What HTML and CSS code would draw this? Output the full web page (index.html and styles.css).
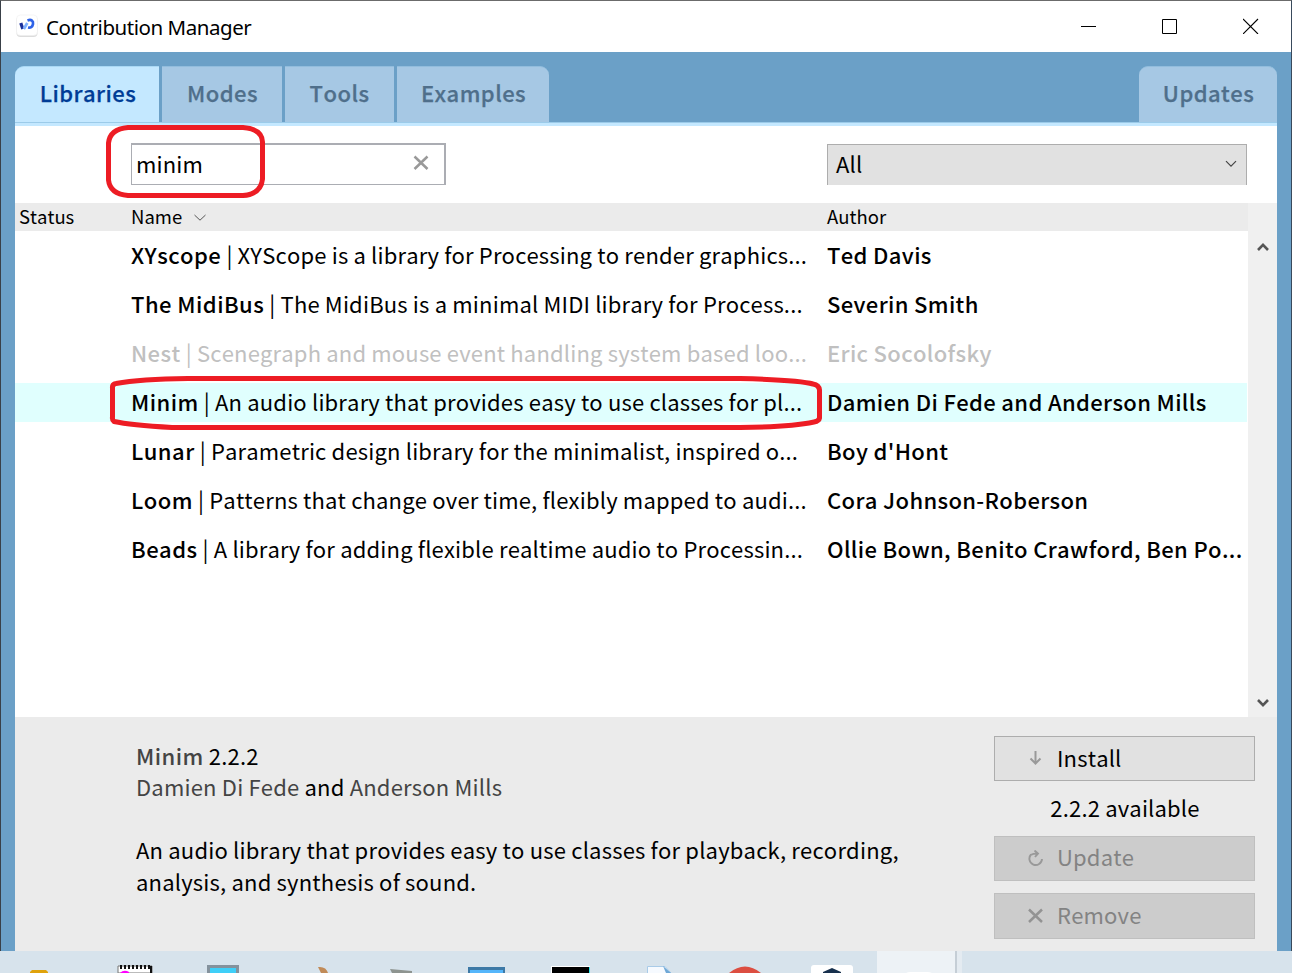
FILE: index.html
```html
<!DOCTYPE html>
<html lang="en">
<head>
<meta charset="utf-8">
<title>Contribution Manager</title>
<link rel="stylesheet" href="styles.css">
</head>
<body>
<div class="screen">
  <div class="window">
    <header class="titlebar">
      <svg class="app-icon" width="24" height="24" viewBox="0 0 24 24">
        <rect x="1.5" y="2" width="21" height="21" rx="4" fill="#dcdcdc"/>
        <rect x="1.500" y="1" width="21" height="20.5" rx="4" fill="#fff" stroke="#eee" stroke-width=".6"/>
        <path d="M5.800 9l2 6" stroke="#1b2f9a" stroke-width="3.200"/>
        <path d="M8.800 15l3.500-6" stroke="#7db0ff" stroke-width="2.800"/>
        <path d="M12.500 6.500c4-1.500 6 .5 5.500 3.500s-2.500 4-5 3.500" fill="none" stroke="#2f63e8" stroke-width="2.700"/>
      </svg>
      <h1 class="title">Contribution Manager</h1>
      <div class="controls">
        <svg width="16" height="16" viewBox="0 0 16 16"><path d="M0 8.500h15" stroke="#000"/></svg>
        <svg width="16" height="16" viewBox="0 0 16 16"><path d="M.5 1.500h14v14H.5z" fill="none" stroke="#000"/></svg>
        <svg width="16" height="16" viewBox="0 0 16 16"><path d="M0 1l15 15M15 1L0 16" stroke="#000" stroke-width="1.100"/></svg>
      </div>
    </header>
    <main class="frame">
      <nav class="tabs">
        <div class="tab active t-lib">Libraries</div>
        <div class="tab t-modes">Modes</div>
        <div class="tab t-tools">Tools</div>
        <div class="tab t-ex">Examples</div>
        <div class="tab t-up">Updates</div>
      </nav>
      <section class="filters">
        <div class="search"><span>minim</span>
          <svg width="16" height="16" viewBox="0 0 16 16"><path d="M1.500 1.500l13 12.500M14.500 1.500L1.500 14" stroke="#999" stroke-width="2.500"/></svg>
        </div>
        <div class="select"><span>All</span>
          <svg width="12" height="8" viewBox="0 0 12 8"><path d="M1 1.200l5 5 5-5" fill="none" stroke="#444" stroke-width="1.200"/></svg>
        </div>
      </section>
      <section class="list">
        <div class="table">
          <div class="thead">
            <span>Status</span>
            <span class="sorted">Name <svg width="12" height="8" viewBox="0 0 12 8"><path d="M.5 1l5.500 5.200L11.500 1" fill="none" stroke="#555"/></svg></span>
            <span>Author</span>
          </div>
          <div class="row"><p><b>XYscope</b> | XYScope is a library for Processing to render graphics...</p><b>Ted Davis</b></div>
          <div class="row"><p><b>The MidiBus</b> | The MidiBus is a minimal MIDI library for Process...</p><b>Severin Smith</b></div>
          <div class="row muted"><p><b>Nest</b> | Scenegraph and mouse event handling system based loo...</p><b>Eric Socolofsky</b></div>
          <div class="row selected"><p><b>Minim</b> | An audio library that provides easy to use classes for pl...</p><b>Damien Di Fede and Anderson Mills</b></div>
          <div class="row"><p><b>Lunar</b> | Parametric design library for the minimalist, inspired o...</p><b>Boy d'Hont</b></div>
          <div class="row"><p><b>Loom</b> | Patterns that change over time, flexibly mapped to audi...</p><b>Cora Johnson-Roberson</b></div>
          <div class="row"><p><b>Beads</b> | A library for adding flexible realtime audio to Processin...</p><b>Ollie Bown, Benito Crawford, Ben Po...</b></div>
        </div>
        <div class="scrollbar">
          <svg width="12" height="10" viewBox="0 0 12 10"><path d="M1 8l5-5.200L11 8" fill="none" stroke="#555" stroke-width="2.600"/></svg>
          <svg width="12" height="10" viewBox="0 0 12 10"><path d="M1 2l5 5.200L11 2" fill="none" stroke="#555" stroke-width="2.600"/></svg>
        </div>
      </section>
      <section class="detail">
        <div class="info">
          <p><b class="link">Minim</b> 2.2.2</p>
          <p class="authors"><span class="link">Damien Di Fede</span> and <span class="link">Anderson Mills</span></p>
          <p class="desc">An audio library that provides easy to use classes for playback, recording,<br>analysis, and synthesis of sound.</p>
        </div>
        <div class="actions">
          <div class="button install"><svg width="16" height="16" viewBox="0 0 16 16"><path d="M8.500 1v12M3.500 8.500l5 5 5-5" fill="none" stroke="#999" stroke-width="2"/></svg>Install</div>
          <div class="available">2.2.2 available</div>
          <div class="button disabled update"><svg width="16" height="16" viewBox="0 0 16 16"><path d="M4 4.500A6.300 6.300 0 1 0 15 9M3.500 5Q6 3.500 10.500 3.500M7.500 .5l3.500 3L8 7" fill="none" stroke="#999" stroke-width="1.900"/></svg>Update</div>
          <div class="button disabled remove"><svg width="16" height="16" viewBox="0 0 16 16"><path d="M2 1.500l13 12.500M15 1.500L2 14" stroke="#939393" stroke-width="2.500"/></svg>Remove</div>
        </div>
      </section>
    </main>
  </div>
  <footer class="taskbar">
    <svg width="1292" height="22" viewBox="0 0 1292 22">
      <path d="M877 0h78v22h-78z" fill="#edf2f6"/><path d="M955 0h2v22h-2z" fill="#c5ced6"/><path d="M957 0h5v22h-5z" fill="#e4ebf1"/>
      <path d="M30 22v-1l2-2h14l2 2v1z" fill="#dfa20c"/>
      <path d="M118 15h34v7h-34z" fill="#fff" stroke="#777"/><path d="M120 16h30" stroke="#111" stroke-width="4" stroke-dasharray="2 2"/><path d="M151 15v7" stroke="#111" stroke-width="2"/><path d="M120 22q4-4 9-1v1z" fill="#f0f"/>
      <path d="M207 14h32v8h-32z" fill="#84929d"/><path d="M210 17h26v5h-26z" fill="#3fcff8"/>
      <path d="M318 16q8-1 10 6h-7z" fill="#c18b58"/>
      <path d="M390 18l22 2v2h-20z" fill="#8e9490"/>
      <path d="M468 16h37v6h-37z" fill="#3d79a6"/><path d="M470 19h33v3h-33z" fill="#55b6fb"/>
      <path d="M551 15h39v7h-39z" fill="#fff"/><path d="M552 16h37v6h-37z"/><path d="M589.500 16v6" stroke="#35e5ee"/>
      <path d="M647.500 22v-6.500H665l6 6.500" fill="#f6faff" stroke="#a9cbe8"/><path d="M663 15l8 7h-5z" fill="#6ea7d6"/>
      <path d="M729 22q16-13 32 0z" fill="#dc4e41"/>
      <path d="M811 22v-5q0-3 3-3h36q3 0 3 3v5z" fill="#fff"/><path d="M823 22v-1l9-4 9 4v1z" fill="#17304d"/>
      <path d="M906 22q2-1 5-1h16q3 0 5 1z" fill="#fff"/>
    </svg>
  </footer>
  <svg class="marks" width="1292" height="973" viewBox="0 0 1292 973">
    <path d="M128 127.500H243Q262 129 262.500 142V179Q261 194 243 195.500H128Q110 194 108.500 180V143Q110 129 128 127.500Z"/>
    <path d="M188 378.500H740Q800 380 813 384Q819 385 819.500 390V418Q819 421 814 422Q790 427 740 427.500H172Q130 425 114 421.500Q112 420 112.500 417V388Q112 384 116 383.500Q140 379 188 378.500Z"/>
  </svg>
</div>
</body>
</html>
```
FILE: styles.css
```css
* { box-sizing: border-box; }
body { margin: 0; }
p, h1 { margin: 0; font-weight: 400; }
svg { display: block; flex: none; }
.screen {
  position: relative; width: 1292px; height: 973px; overflow: hidden;
  display: flex; flex-direction: column; color: #000; background: #d7e3ec;
  font: 22px/32px "Noto Sans CJK KR", "Noto Sans CJK JP", sans-serif; letter-spacing: .17px; font-kerning: none;
}
b { font-weight: 500; letter-spacing: .35px; }
p b { letter-spacing: .46px; }
.window { height: 951px; border: 1px solid #6b6b6b; border-bottom: 0; border-left-color: #394048; border-right-color: #394a5c; display: flex; flex-direction: column; }
.titlebar { height: 51px; background: #fff; display: flex; align-items: center; padding: 0 32px 2px 14px; }
.title { font: 400 20.5px/30px "Noto Sans", sans-serif; letter-spacing: -.46px; margin: 2px 0 0 7px; }
.controls { display: flex; gap: 65px; margin-left: auto; }
.frame { flex: 1; background: #6ba0c7; padding: 14px 14px 0; display: flex; flex-direction: column; }
.tabs { height: 60px; border-bottom: 3px solid #c4e8ff; display: flex; gap: 3px; box-shadow: inset 0 -1px #9ccbe9; }
.tab { height: 56px; background: #a6c8e4; color: #4f6f8b; font-weight: 500; -webkit-text-stroke: .25px currentColor; display: flex; align-items: center; justify-content: center; letter-spacing: .45px; border-top: 1px solid #92bddd; padding: 0 0 6px 1px; }
.active { background: #c4e8ff; color: #003c96; border-color: #aad8f4; }
.t-lib { width: 144px; border-radius: 9px 0 0; padding-left: 2px; }
.t-modes { width: 120px; }
.t-tools { width: 109px; padding-left: 0; }
.t-ex { width: 152px; border-radius: 0 9px 0 0; }
.t-up { width: 138px; border-radius: 9px 9px 0 0; margin-left: auto; }
.filters { height: 77px; background: #fff; display: flex; padding: 17px 30px 18px 116px; justify-content: space-between; }
.search { width: 315px; border: 1px solid #abadb3; border-top-width: 2px; border-right-width: 2px; display: flex; align-items: center; justify-content: space-between; padding: 0 15px 3px 4px; }
.select { width: 420px; margin-top: 1px; background: #e1e1e1; border: 1px solid #adadad; border-bottom: 0; display: flex; align-items: center; justify-content: space-between; padding: 0 9px 4px 8px; }
.select svg { margin-top: 1px; }
.list { height: 514px; background: #fff; display: flex; }
.table { width: 1233px; display: flex; flex-direction: column; gap: 10px; }
.thead { height: 28px; background: #ebebeb; margin-bottom: -5px; display: grid; grid-template-columns: 112px 696px 1fr; padding-left: 4px; font-size: 18.5px; line-height: 27px; letter-spacing: 0; }
.sorted { display: flex; align-items: center; gap: 12px; height: 27px; }
.sorted svg { margin-top: 2px; }
.row { height: 39px; line-height: 37px; display: grid; grid-template-columns: 696px 1fr; padding-left: 116px; white-space: nowrap; }
.muted { color: #c0c0c0; }
.selected { background: #e0fffe; margin-right: 1px; }
.scrollbar { width: 29px; background: #f0f0f0; display: flex; flex-direction: column; justify-content: space-between; align-items: center; padding: 39px 0 9px 0; }
.detail { height: 234px; background: #ebebeb; display: flex; justify-content: space-between; padding: 19px 22px 0 121px; }
.info { padding-top: 3px; white-space: nowrap; letter-spacing: .19px; }
.link { color: #444; }
.authors { margin-top: -1px; }
.desc { margin-top: 31px; }
.actions { width: 261px; }
.button { height: 45px; border: 1px solid #adadad; background: #e1e1e1; display: flex; align-items: center; gap: 14px; padding: 0 0 4px 32px; }
.button svg { margin-top: 3px; }
.disabled { background: #ccc; border-color: #bfbfbf; color: #838383; }
.update { padding-bottom: 5px; }
.available { height: 55px; line-height: 52px; text-align: center; padding-left: 1px; }
.remove { margin-top: 12px; height: 46px; }
.taskbar { height: 22px; }
.marks { position: absolute; left: 0; top: 0; fill: none; stroke: #ed1c24; stroke-width: 5; }
```
